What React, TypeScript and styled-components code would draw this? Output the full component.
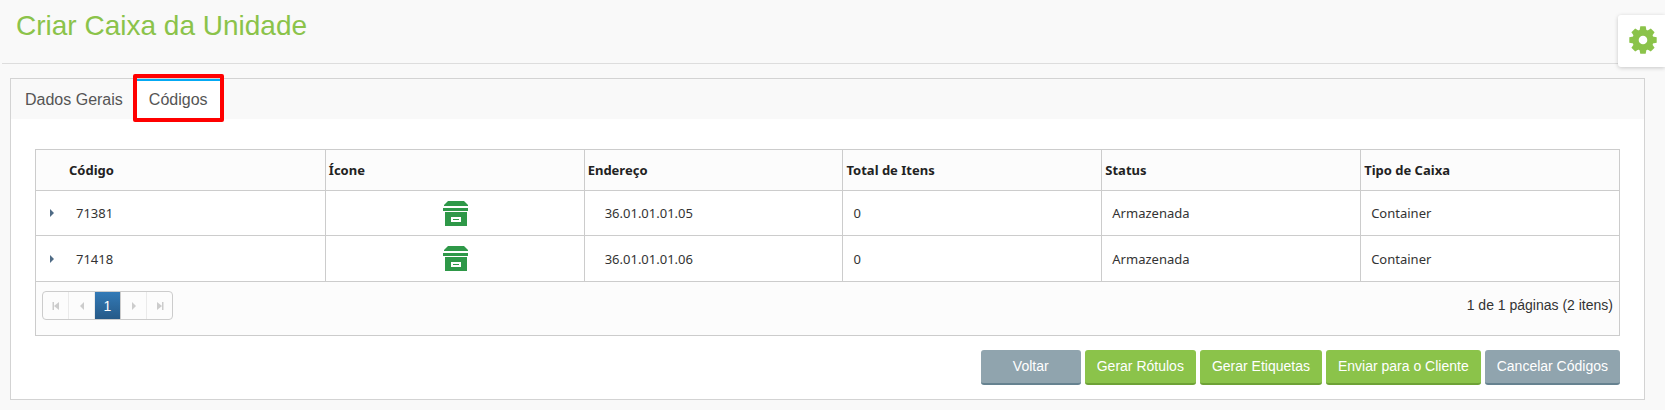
import React from "react";
import styled, { createGlobalStyle, css } from "styled-components";

const line = "#cccccc";
const green = "#8bc34a";

const GlobalStyle = createGlobalStyle`
  * { box-sizing: border-box; }
  body {
    margin: 0;
    background: #f9f9f9;
    font-family: "Liberation Sans", Arial, sans-serif;
    font-size: 14px;
    color: #333;
  }
  button { font-family: inherit; cursor: pointer; }
`;

const Page = styled.div`
  position: relative;
  padding-bottom: 10px;
`;

const Header = styled.header`
  margin-left: 2px;
  padding: 10px 14px 21px;
  border-bottom: 1px solid #ddd;
`;

const Title = styled.h1`
  margin: 0;
  font-size: 28px;
  line-height: 32px;
  font-weight: 400;
  color: ${green};
`;

const SettingsButton = styled.button`
  position: absolute;
  top: 15px;
  right: 0;
  width: 47px;
  height: 52px;
  display: flex;
  align-items: center;
  justify-content: center;
  padding: 0 0 2px 3px;
  border: 0;
  border-radius: 3px 0 0 3px;
  background: #fff;
  box-shadow: 0 1px 4px rgba(0, 0, 0, 0.2);
  color: ${green};
`;

const Panel = styled.section`
  margin: 14px 20px 0 10px;
  border: 1px solid #d3d3d3;
  background: #fff;
`;

const TabList = styled.div`
  display: flex;
  padding-left: 1px;
  background: #f9f9f9;
`;

const Tab = styled.button<{ $active?: boolean }>`
  position: relative;
  height: 40px;
  padding: 0 13px;
  border: 0;
  border-top: 2px solid transparent;
  background: transparent;
  font-size: 16px;
  line-height: 20px;
  color: #555;
  ${(p) =>
    p.$active &&
    css`
      border-top-color: #03a9f4;
      background: #fff;
      &::after {
        content: "";
        position: absolute;
        inset: -7px -3px -3px -3px;
        border: 4px solid #f00;
        border-radius: 2px;
      }
    `}
`;

const PanelBody = styled.div`
  padding: 30px 24px 14px;
`;

const Grid = styled.div`
  border: 1px solid ${line};
`;

const Table = styled.table`
  width: 100%;
  table-layout: fixed;
  border-collapse: separate;
  border-spacing: 0;
  font-family: "Noto Sans", sans-serif;
  font-size: 13px;
  line-height: 20px;
`;

const ExpandCol = styled.col`
  width: 30px;
`;

const HeadCell = styled.th<{ $first?: boolean }>`
  height: 41px;
  padding: 0 3px;
  border-left: ${(p) => (p.$first ? "0" : `1px solid ${line}`)};
  border-bottom: 1px solid ${line};
  background: #fcfcfc;
  text-align: left;
  font-weight: 700;
  color: #222;
`;

const Cell = styled.td<{ $first?: boolean; $indent?: number }>`
  height: 45px;
  padding: 0 10px 0 ${(p) => p.$indent ?? 10}px;
  border-left: ${(p) => (p.$first ? "0" : `1px solid ${line}`)};
  border-bottom: 1px solid ${line};
  color: #333;
  tr:last-child > & { height: 46px; }
`;

const IconCell = styled(Cell)`
  padding: 0 0 0 2px;
  svg { display: block; margin: 0 auto; }
`;

const ExpandButton = styled.button`
  display: flex;
  align-items: center;
  justify-content: center;
  width: 30px;
  height: 24px;
  padding: 0 0 0 2px;
  border: 0;
  background: none;
  color: #4f6b85;
`;

const ExpandCell = styled(Cell)`
  padding: 0;
`;

const GridFooter = styled.footer`
  display: flex;
  justify-content: space-between;
  align-items: flex-start;
  height: 53px;
  padding: 9px 6px;
  background: #fcfcfc;
`;

const Pager = styled.nav`
  display: flex;
  height: 29px;
  border: 1px solid ${line};
  border-radius: 4px;
`;

const PageButton = styled.button<{ $current?: boolean }>`
  display: flex;
  align-items: center;
  justify-content: center;
  width: 26px;
  padding: 0;
  border: 0;
  border-right: 1px solid ${(p) => (p.$current ? line : "#eaeaea")};
  background: ${(p) => (p.$current ? "linear-gradient(#337ab7, #265a88)" : "none")};
  font-size: 14px;
  color: ${(p) => (p.$current ? "#fff" : line)};
  &:last-child { width: 25px; border-right: 0; }
`;

const PageStatus = styled.span`
  line-height: 28px;
`;

const Actions = styled.div`
  display: flex;
  justify-content: flex-end;
  gap: 4px;
  margin-top: 14px;
`;

const ActionButton = styled.button<{ $muted?: boolean }>`
  min-width: 100px;
  height: 35px;
  padding: 0 12px 1px;
  border: 0;
  border-bottom: 2px solid ${(p) => (p.$muted ? "#668290" : "#6ea236")};
  border-radius: 3px;
  background: ${(p) => (p.$muted ? "#90a4ae" : green)};
  font-size: 14px;
  line-height: 20px;
  color: #fff;
`;

const GearIcon = () => (
  <svg width="28" height="28" viewBox="-14 -14 28 28" fill="currentColor" aria-hidden="true">
    <mask id="gear-hole">
      <rect x="-14" y="-14" width="28" height="28" fill="#fff" />
      <circle r="4.3" fill="#000" />
    </mask>
    <g mask="url(#gear-hole)">
      <circle r="10.6" />
      {[0, 45, 90, 135].map((angle) => (
        <path key={angle} transform={`rotate(${angle})`} d="M-2.7-13.7h5.4L3.5-9.5V9.5L2.7 13.7h-5.4L-3.5 9.5V-9.5z" />
      ))}
    </g>
  </svg>
);

const BoxIcon = () => (
  <svg width="25" height="25" viewBox="0 0 25 25" fill="#2e9848" role="img" aria-label="Caixa">
    <path d="M5 0h16l4 4v1H1V4z" />
    <path d="M0 7h25v3H0z" />
    <path fillRule="evenodd" d="M2 11h22v14H2zM8 16v5h10v-5z" />
    <path d="M10 18h6v1h-6z" />
  </svg>
);

const Arrow = ({ back, bar }: { back?: boolean; bar?: boolean }) => (
  <svg width="8" height="8" viewBox="0 0 8 8" fill="currentColor" aria-hidden="true">
    <g transform={back ? "matrix(-1 0 0 1 8 0)" : undefined}>
      <path d={bar ? "M1 0l5 4-5 4zM6 0h1.500v8H6z" : "M2 0l4 4-4 4z"} />
    </g>
  </svg>
);

const headings = ["Código", "Ícone", "Endereço", "Total de Itens", "Status", "Tipo de Caixa"];

const boxes = [
  { code: "71381", address: "36.01.01.01.05", total: 0, status: "Armazenada", type: "Container" },
  { code: "71418", address: "36.01.01.01.06", total: 0, status: "Armazenada", type: "Container" },
];

export default function App() {
  return (
    <Page>
      <GlobalStyle />
      <Header>
        <Title>Criar Caixa da Unidade</Title>
      </Header>
      <SettingsButton type="button" aria-label="Configurações">
        <GearIcon />
      </SettingsButton>
      <Panel>
        <TabList role="tablist">
          <Tab type="button" role="tab" aria-selected={false}>Dados Gerais</Tab>
          <Tab type="button" role="tab" aria-selected $active>Códigos</Tab>
        </TabList>
        <PanelBody role="tabpanel">
          <Grid>
            <Table>
              <colgroup>
                <ExpandCol />
                {headings.map((h) => <col key={h} />)}
              </colgroup>
              <thead>
                <tr>
                  <HeadCell $first />
                  {headings.map((h, i) => (
                    <HeadCell key={h} scope="col" $first={i === 0}>{h}</HeadCell>
                  ))}
                </tr>
              </thead>
              <tbody>
                {boxes.map((box) => (
                  <tr key={box.code}>
                    <ExpandCell $first>
                      <ExpandButton type="button" aria-label={`Expandir ${box.code}`}>
                        <Arrow />
                      </ExpandButton>
                    </ExpandCell>
                    <Cell $first>{box.code}</Cell>
                    <IconCell><BoxIcon /></IconCell>
                    <Cell $indent={20}>{box.address}</Cell>
                    <Cell>{box.total}</Cell>
                    <Cell>{box.status}</Cell>
                    <Cell>{box.type}</Cell>
                  </tr>
                ))}
              </tbody>
            </Table>
            <GridFooter>
              <Pager aria-label="Paginação">
                <PageButton type="button" aria-label="Primeira página"><Arrow back bar /></PageButton>
                <PageButton type="button" aria-label="Página anterior"><Arrow back /></PageButton>
                <PageButton type="button" aria-current="page" $current>1</PageButton>
                <PageButton type="button" aria-label="Próxima página"><Arrow /></PageButton>
                <PageButton type="button" aria-label="Última página"><Arrow bar /></PageButton>
              </Pager>
              <PageStatus>1 de 1 páginas (2 itens)</PageStatus>
            </GridFooter>
          </Grid>
          <Actions>
            <ActionButton type="button" $muted>Voltar</ActionButton>
            <ActionButton type="button">Gerar Rótulos</ActionButton>
            <ActionButton type="button">Gerar Etiquetas</ActionButton>
            <ActionButton type="button">Enviar para o Cliente</ActionButton>
            <ActionButton type="button" $muted>Cancelar Códigos</ActionButton>
          </Actions>
        </PanelBody>
      </Panel>
    </Page>
  );
}
